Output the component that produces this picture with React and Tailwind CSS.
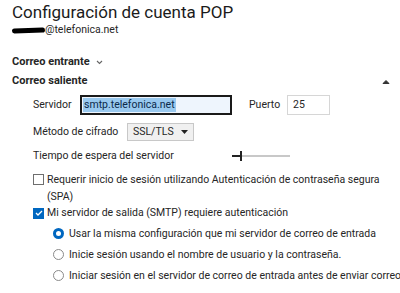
import React from 'react';

function Radio({ checked, children }) {
  return (
    <div className="flex items-center gap-[5px] h-[21px]">
      {checked ? (
        <span className="w-[11px] h-[11px] rounded-full bg-[#0067c0] flex items-center justify-center shrink-0">
          <span className="w-[5px] h-[5px] rounded-full bg-white" />
        </span>
      ) : (
        <span className="w-[11px] h-[11px] rounded-full border border-[#8a8a8a] bg-white shrink-0" />
      )}
      <span className="whitespace-nowrap">{children}</span>
    </div>
  );
}

export default function App() {
  return (
    <div
      className="w-[400px] h-[293px] bg-white text-[#262626] overflow-hidden pl-[12px] pt-[2px]"
      style={{ fontFamily: 'Roboto, "Noto Sans", sans-serif' }}
    >
      <h1 className="text-[17px] leading-[20px] text-[#1b1b1b]">Configuración de cuenta POP</h1>
      <div className="flex items-center text-[10.5px] leading-[16px] h-[16px]">
        <span className="inline-block w-[33px] h-[5px] bg-black rounded-full -rotate-2" />
        <span>@telefonica.net</span>
      </div>

      <div className="mt-[16px] flex items-center gap-[6px] text-[11px] font-bold leading-[16px] h-[16px]">
        <span>Correo entrante</span>
        <svg width="7" height="5" viewBox="0 0 7 5" className="mt-[1px]">
          <path d="M1 1l2.5 2.5L6 1" fill="none" stroke="#666" strokeWidth="1.1" />
        </svg>
      </div>
      <div className="mt-[3px] flex items-center justify-between pr-[10px] text-[11px] font-bold leading-[16px] h-[16px]">
        <span>Correo saliente</span>
        <svg width="8" height="5" viewBox="0 0 8 5">
          <path d="M1 4.5L4 1.5 7 4.5z" fill="#333" stroke="#333" strokeWidth="1" />
        </svg>
      </div>

      <div className="pl-[21px] text-[10.5px]">
        <div className="mt-[6px] flex items-center h-[20px]">
          <span className="w-[47px]">Servidor</span>
          <div className="w-[152px] h-[20px] border-2 border-[#1a1a1a] bg-[#eef5fd] flex items-center pl-[1px]">
            <span className="bg-[#99c9ef] text-[#0b2a4a] leading-[14px] px-[1px]">smtp.telefonica.net</span>
          </div>
          <span className="ml-[17px] w-[38px]">Puerto</span>
          <div className="w-[43px] h-[20px] border border-[#d6d6d6] flex items-center pl-[5px]">25</div>
        </div>

        <div className="mt-[8px] flex items-center h-[18px]">
          <span className="w-[94px]">Método de cifrado</span>
          <div className="w-[67px] h-[18px] border border-[#c8c8c8] bg-[#f0f0f0] flex items-center justify-between pl-[5px] pr-[5px]">
            <span>SSL/TLS</span>
            <svg width="7" height="4" viewBox="0 0 7 4">
              <path d="M0 0h7L3.5 4z" fill="#222" />
            </svg>
          </div>
        </div>

        <div className="mt-[5px] flex items-center h-[20px]">
          <span className="w-[199px] whitespace-nowrap">Tiempo de espera del servidor</span>
          <div className="relative w-[58px] h-[10px] flex items-center">
            <div className="w-[9px] h-[2px] bg-[#222]" />
            <div className="flex-1 h-[2px] bg-[#c8c8c8]" />
            <div className="absolute left-[8px] top-0 w-[2px] h-[10px] bg-[#222]" />
          </div>
        </div>

        <div className="mt-[5px] flex items-start gap-[3px]">
          <span className="mt-[3px] w-[11px] h-[11px] border border-[#6e6e6e] bg-white shrink-0" />
          <span className="w-[335px] leading-[17px]">
            Requerir inicio de sesión utilizando Autenticación de contraseña segura (SPA)
          </span>
        </div>

        <div className="mt-[0px] flex items-center gap-[3px] h-[16px]">
          <span className="w-[11px] h-[11px] bg-[#0067c0] flex items-center justify-center shrink-0">
            <svg width="8" height="6" viewBox="0 0 8 6">
              <path d="M1 3l2 2 4-4" fill="none" stroke="white" strokeWidth="1.3" />
            </svg>
          </span>
          <span>Mi servidor de salida (SMTP) requiere autenticación</span>
        </div>

        <div className="mt-[2px] pl-[20px] flex flex-col">
          <Radio checked>Usar la misma configuración que mi servidor de correo de entrada</Radio>
          <Radio>Inicie sesión usando el nombre de usuario y la contraseña.</Radio>
          <Radio>Iniciar sesión en el servidor de correo de entrada antes de enviar correo</Radio>
        </div>
      </div>
    </div>
  );
}
